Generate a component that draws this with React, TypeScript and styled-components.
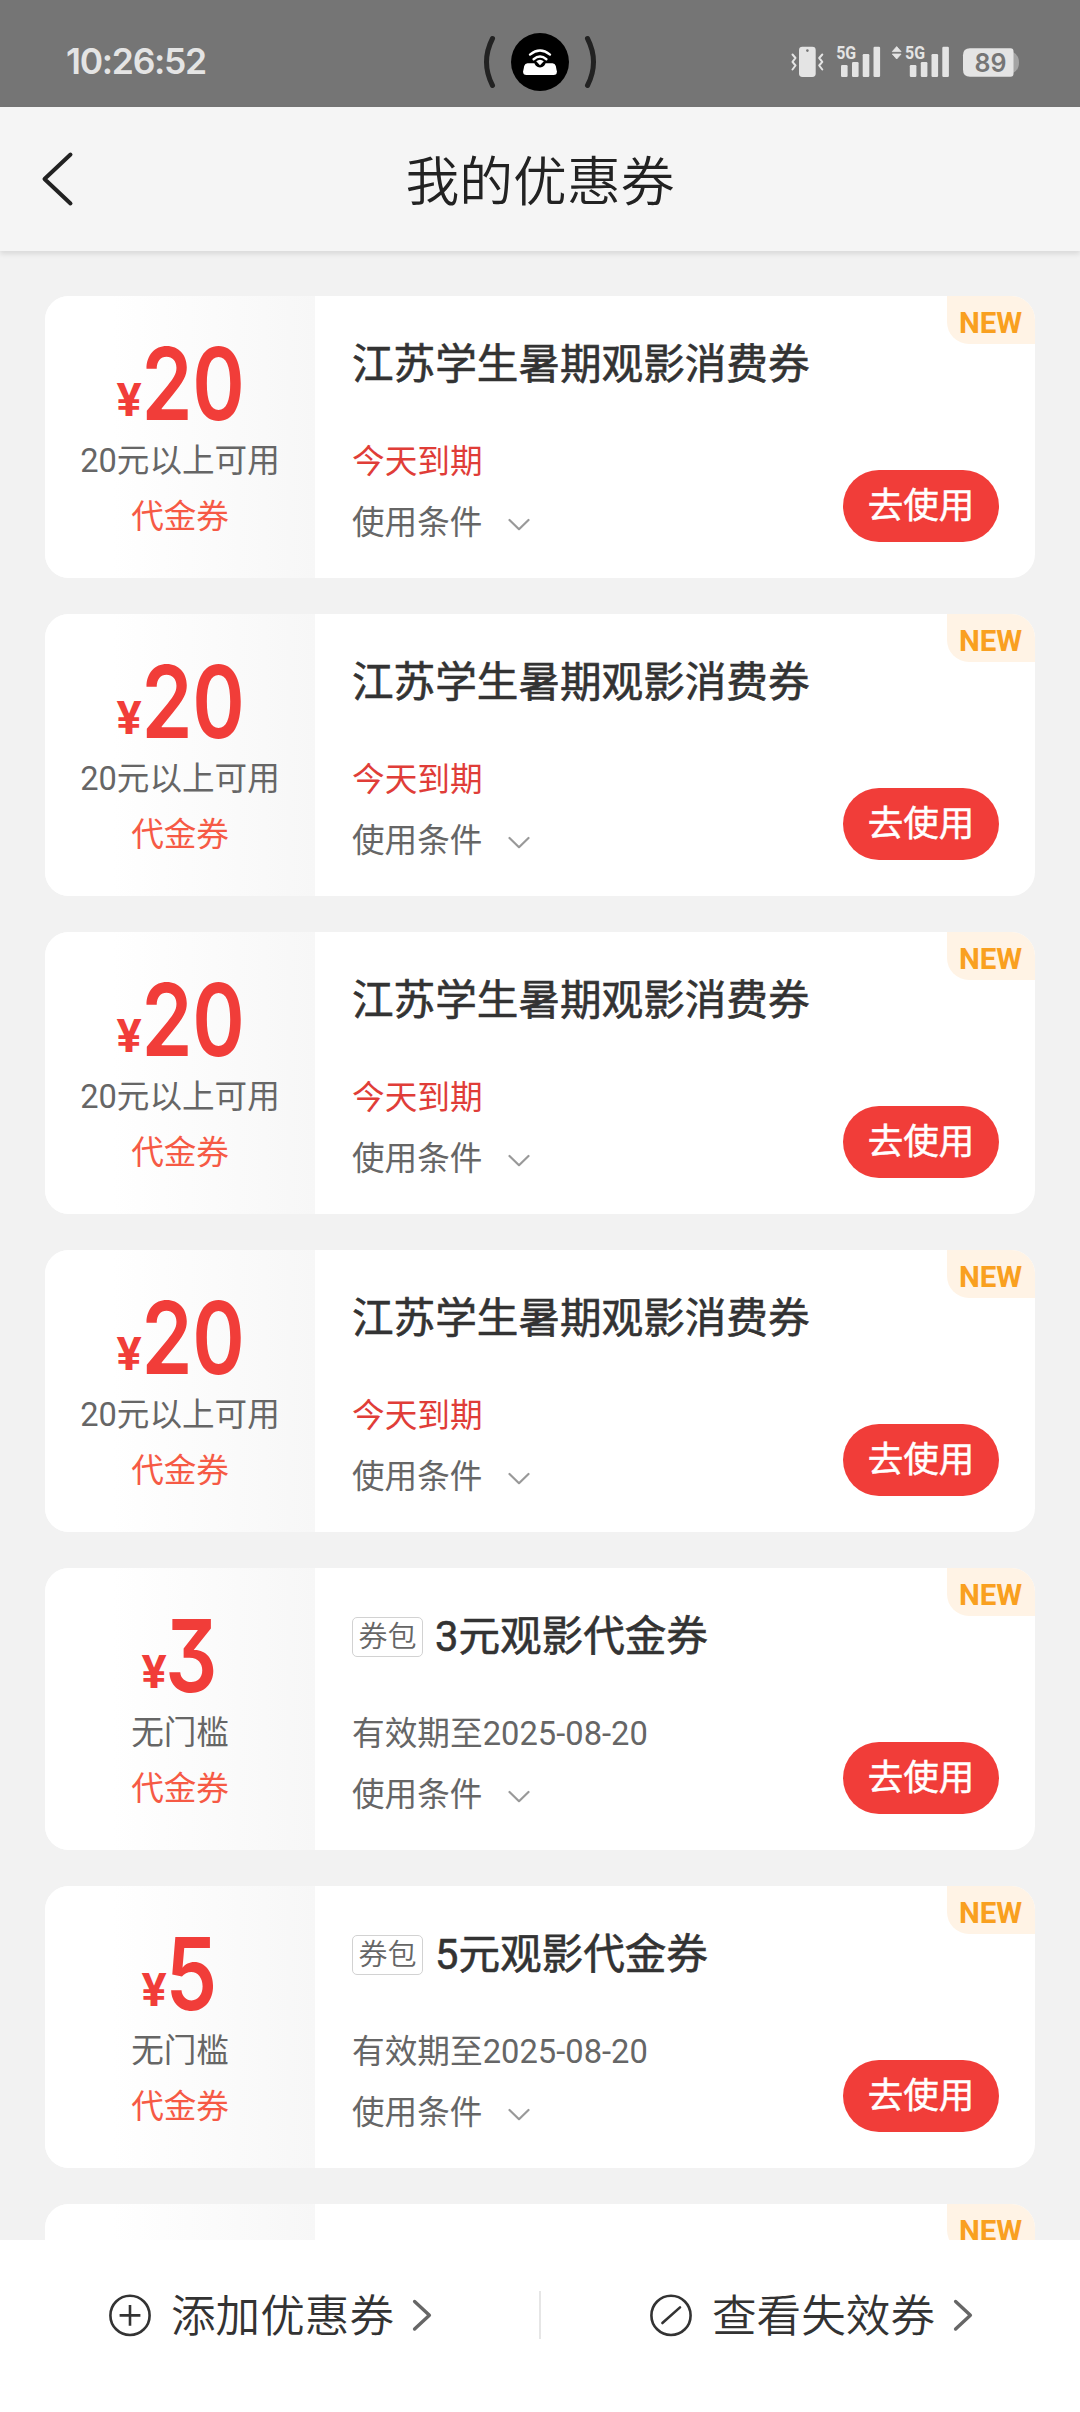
import React from "react";
import styled, { createGlobalStyle } from "styled-components";

const Global = createGlobalStyle`
  *, *::before, *::after { box-sizing: border-box; }
  body {
    margin: 0;
    background: #f2f2f2;
    font-family: Roboto, "Noto Sans CJK SC", sans-serif;
    -webkit-font-smoothing: antialiased;
  }
`;

const Screen = styled.div`
  width: 1080px;
  height: 2412px;
  display: flex;
  flex-direction: column;
  overflow: hidden;
  background: #f2f2f2;
`;

const StatusBar = styled.div`
  flex: none;
  height: 107px;
  display: grid;
  grid-template-columns: 1fr 120px 1fr;
  align-items: center;
  padding: 17px 60px 0;
  background: #757575;
`;

const Clock = styled.span`
  padding-left: 6px;
  font: 600 35.5px/40px Inter, sans-serif;
  letter-spacing: -1.3px;
  color: #e4e4e4;
  white-space: nowrap;
`;

const StatusIcons = styled.div`
  display: flex;
  justify-content: flex-end;
`;

const Header = styled.header`
  flex: none;
  height: 144px;
  display: grid;
  grid-template-columns: 120px 1fr 120px;
  align-items: center;
  background: #f5f5f5;
  box-shadow: 0 3px 5px rgba(0, 0, 0, 0.1);
`;

const BackButton = styled.button`
  height: 100px;
  padding: 0 0 0 40px;
  border: 0;
  background: none;
  display: flex;
  align-items: center;
`;

const PageTitle = styled.h1`
  margin: 0;
  padding-top: 7px;
  text-align: center;
  font-size: 53.8px;
  line-height: 72px;
  font-weight: 350;
  color: #222;
`;

const List = styled.main`
  flex: 1;
  min-height: 0;
  overflow: hidden;
  margin-top: 12px;
  padding: 33px 45px 0;
  display: flex;
  flex-direction: column;
  gap: 36px;
`;

const Card = styled.article`
  position: relative;
  flex: none;
  height: 282px;
  display: grid;
  grid-template-columns: 270px 1fr 192px;
  border-radius: 24px;
  overflow: hidden;
  background: #fff;
`;

const ValuePanel = styled.div`
  display: flex;
  flex-direction: column;
  align-items: center;
  background: linear-gradient(90deg, #fff 25%, #f7f7f7 100%);
`;

const Price = styled.div`
  height: 138px;
  padding-right: 2px;
  display: flex;
  align-items: flex-end;
  color: #f13d39;
`;

const Yen = styled.span`
  font: 700 47px/47px Roboto, sans-serif;
  width: 26px;
  padding-bottom: 11px;
  display: flex;
  justify-content: center;
`;

const Amount = styled.span<{ $digits: number }>`
  width: ${(p) => p.$digits * 50}px;
  display: flex;
  justify-content: center;
  font: 600 100px/100px Inter, sans-serif;
  font-feature-settings: "cv09" 1, "tnum" 1;
  letter-spacing: ${(p) => (p.$digits > 1 ? "-2px" : "0")};
  transform: scaleX(0.82);
`;

const Rule = styled.div`
  font-size: 32.6px;
  line-height: 54px;
  color: #666;
  white-space: nowrap;
`;

const Kind = styled.div`
  padding-top: 2px;
  font-size: 32.6px;
  line-height: 54px;
  color: #f65a45;
`;

const Details = styled.div`
  padding: 39px 0 0 37px;
  display: flex;
  flex-direction: column;
`;

const TitleRow = styled.div`
  height: 60px;
  margin-bottom: 37px;
  display: flex;
  align-items: center;
  gap: 12px;
`;

const PackTag = styled.span`
  height: 40px;
  width: 71px;
  display: flex;
  align-items: center;
  justify-content: center;
  border: 1.5px solid #d2d2d2;
  border-radius: 5px;
  font-size: 29px;
  line-height: 38px;
  font-weight: 350;
  color: #666;
`;

const CouponTitle = styled.h2`
  margin: 0;
  font-size: 41.6px;
  line-height: 60px;
  font-weight: 400;
  -webkit-text-stroke: 0.6px #333;
  color: #333;
  white-space: nowrap;
`;

const Expiry = styled.div<{ $urgent?: boolean }>`
  font-size: 32.7px;
  line-height: 61px;
  color: ${(p) => (p.$urgent ? "#e03d38" : "#666")};
  white-space: nowrap;
`;

const Terms = styled.div`
  display: flex;
  align-items: center;
  gap: 25px;
  font-size: 32.6px;
  line-height: 61px;
  color: #666;
`;

const Action = styled.div`
  padding: 174px 36px 0 0;
`;

const UseButton = styled.button`
  width: 156px;
  height: 72px;
  padding: 0 0 8px;
  border: 0;
  border-radius: 36px;
  background: #f13d39;
  color: #fff;
  font-family: inherit;
  font-size: 35.5px;
  -webkit-text-stroke: 0.5px #fff;
`;

const NewBadge = styled.span`
  position: absolute;
  top: 0;
  right: 0;
  width: 88px;
  height: 48px;
  padding: 3px 1px 0 0;
  border-bottom-left-radius: 22px;
  background: #fff3e5;
  color: #f9a020;
  font: 700 29.5px/48px Roboto, sans-serif;
  text-align: center;
`;

const Footer = styled.footer`
  flex: none;
  height: 172px;
  display: grid;
  grid-template-columns: 1fr 2px 1fr;
  background: #fff;
`;

const FooterLink = styled.button`
  height: 150px;
  padding: 0 0 0 3px;
  border: 0;
  background: none;
  display: flex;
  align-items: center;
  justify-content: center;
  font-family: inherit;
  font-size: 44.6px;
  font-weight: 350;
  color: #333;
`;

const LinkText = styled.span`
  margin: 0 17px 0 20px;
  padding-top: 3px;
  line-height: 60px;
`;

const Divider = styled.div`
  height: 48px;
  margin-top: 51px;
  background: #e6e6e6;
`;

const CameraIsland = () => (
  <svg width="120" height="60" viewBox="480 32 120 60" fill="none">
    <path d="M492.5 38.5Q480.5 62 492.5 85.5M587.5 38.5Q599.5 62 587.5 85.5" stroke="#222" strokeWidth="5" strokeLinecap="round" />
    <circle cx="540" cy="62" r="29" fill="#000" />
    <path d="M527.5 63.3H552.5Q555 63.3 555.8 66L556.9 71.5Q557 75 553.5 75H526.5Q523 75 523.1 71.5L524.2 66Q525 63.3 527.5 63.3Z" fill="#fff" />
    <circle cx="540" cy="61.6" r="5.8" fill="#000" />
    <path d="M536.2 61.2Q540 58.2 543.8 61.2L540 65.2Z" fill="#fff" />
    <path d="M530 54.6Q540 46.6 550 54.6M533.6 59.2Q540 54 546.4 59.2" stroke="#fff" strokeWidth="2.4" strokeLinecap="round" />
  </svg>
);

const SignalLabel = styled.text`
  font: 700 18.5px Roboto, sans-serif;
  fill: #e4e4e4;
`;

const BatteryLabel = styled.text`
  font: 600 25.5px Inter, sans-serif;
  fill: #757575;
`;

const Signal = ({ x }: { x: number }) => (
  <g fill="#e4e4e4">
    <SignalLabel x={x} y="59.3" textLength="20" lengthAdjust="spacingAndGlyphs">5G</SignalLabel>
    <rect x={x + 4.8} y="65" width="6.6" height="12" rx="1.2" />
    <rect x={x + 15.8} y="62" width="6.6" height="15" rx="1.2" />
    <rect x={x + 26.5} y="54" width="6.6" height="23" rx="1.2" />
    <rect x={x + 37.3} y="46.7" width="6.6" height="30.3" rx="1.2" />
  </g>
);

const SystemIcons = () => (
  <svg width="230" height="50" viewBox="790 37 230 50" fill="none">
    <rect x="799" y="46.7" width="16.7" height="30.3" rx="3.4" fill="#e4e4e4" />
    <circle cx="807.4" cy="50.6" r="1.3" fill="#757575" />
    <path d="M792.5 54.5L795.5 58L792.5 61.8L795.5 65.5L792.5 69.5M822.3 54.5L819.2 58L822.3 61.8L819.2 65.5L822.3 69.5" stroke="#e4e4e4" strokeWidth="2" strokeLinejoin="round" strokeLinecap="round" />
    <Signal x={836.2} />
    <path d="M892.3 51.6L896.7 46.6L901.1 51.6ZM892.3 54L896.7 59L901.1 54Z" fill="#e4e4e4" stroke="#e4e4e4" strokeWidth="0.8" strokeLinejoin="round" />
    <Signal x={905} />
    <path d="M1013 52Q1019 55 1019 62.5Q1019 70 1013 73Z" fill="#a4a4a4" />
    <path d="M970 48.3H1010.5Q1013.5 48.3 1013.5 51.3V73.8Q1013.5 76.8 1010.5 76.8H970Q963 76.8 963 69.8V55.3Q963 48.3 970 48.3Z" fill="#e4e4e4" />
    <BatteryLabel x="974.5" y="72" textLength="32" lengthAdjust="spacingAndGlyphs">89</BatteryLabel>
  </svg>
);

const BackIcon = () => (
  <svg width="34" height="56" viewBox="0 0 34 56" fill="none" stroke="#222" strokeWidth="4" strokeLinecap="round" strokeLinejoin="round">
    <path d="M30.5 3.5L4.5 28L30.5 52.5" />
  </svg>
);

const ExpandIcon = () => (
  <svg width="24" height="16" viewBox="0 0 24 16" fill="none" stroke="#999" strokeWidth="2.2" strokeLinecap="round" strokeLinejoin="round">
    <path d="M2.5 4L12 13.2L21.5 4" />
  </svg>
);

const NextIcon = () => (
  <svg width="22" height="34" viewBox="0 0 22 34" fill="none" stroke="#666" strokeWidth="3.4" strokeLinecap="round" strokeLinejoin="round">
    <path d="M3.6 3.5L18.4 17.2L3.6 31" />
  </svg>
);

const PlusCircle = () => (
  <svg width="42" height="44" viewBox="1 0 42 44" fill="none" stroke="#333" strokeWidth="2.6">
    <circle cx="22" cy="22.4" r="19.6" />
    <path d="M22 12V32.8M11.6 22.4H32.4" />
  </svg>
);

const SlashCircle = () => (
  <svg width="42" height="44" viewBox="1 0 42 44" fill="none" stroke="#333" strokeWidth="2.6">
    <circle cx="22" cy="22.4" r="19.6" />
    <path d="M13.4 30L31 14.4" strokeLinecap="round" />
  </svg>
);

interface Coupon {
  amount: string;
  rule: string;
  title: string;
  expiry: string;
  urgent?: boolean;
  pack?: boolean;
}

const movie: Coupon = {
  amount: "20",
  rule: "20元以上可用",
  title: "江苏学生暑期观影消费券",
  expiry: "今天到期",
  urgent: true,
};

const pack = (amount: string): Coupon => ({
  amount,
  rule: "无门槛",
  title: `${amount}元观影代金券`,
  expiry: "有效期至2025-08-20",
  pack: true,
});

const coupons: Coupon[] = [movie, movie, movie, movie, pack("3"), pack("5")];

const CouponCard = ({ c }: { c: Coupon }) => (
  <Card>
    <ValuePanel>
      <Price>
        <Yen>¥</Yen>
        <Amount $digits={c.amount.length}>{c.amount}</Amount>
      </Price>
      <Rule>{c.rule}</Rule>
      <Kind>代金券</Kind>
    </ValuePanel>
    <Details>
      <TitleRow>
        {c.pack && <PackTag>券包</PackTag>}
        <CouponTitle>{c.title}</CouponTitle>
      </TitleRow>
      <Expiry $urgent={c.urgent}>{c.expiry}</Expiry>
      <Terms>
        使用条件
        <ExpandIcon />
      </Terms>
    </Details>
    <Action>
      <UseButton>去使用</UseButton>
    </Action>
    <NewBadge>NEW</NewBadge>
  </Card>
);

export default function App() {
  return (
    <Screen>
      <Global />
      <StatusBar>
        <Clock>10:26:52</Clock>
        <CameraIsland />
        <StatusIcons>
          <SystemIcons />
        </StatusIcons>
      </StatusBar>
      <Header>
        <BackButton aria-label="返回">
          <BackIcon />
        </BackButton>
        <PageTitle>我的优惠券</PageTitle>
      </Header>
      <List>
        {coupons.map((c, i) => (
          <CouponCard key={i} c={c} />
        ))}
        <Card>
          <ValuePanel />
          <Details />
          <NewBadge>NEW</NewBadge>
        </Card>
      </List>
      <Footer>
        <FooterLink>
          <PlusCircle />
          <LinkText>添加优惠券</LinkText>
          <NextIcon />
        </FooterLink>
        <Divider />
        <FooterLink>
          <SlashCircle />
          <LinkText>查看失效券</LinkText>
          <NextIcon />
        </FooterLink>
      </Footer>
    </Screen>
  );
}
